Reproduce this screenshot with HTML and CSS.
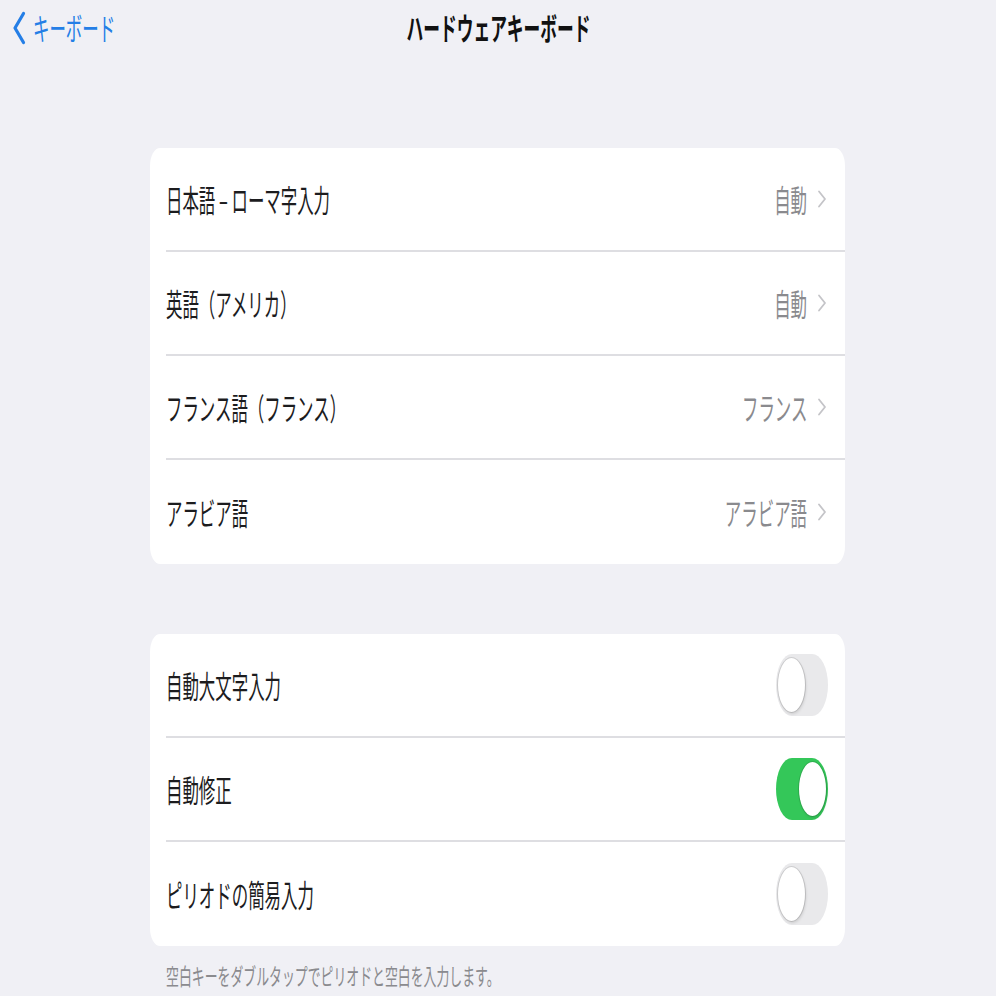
FILE: index.html
```html
<!DOCTYPE html>
<html lang="ja">
<head>
    <meta charset="UTF-8">
    <meta name="viewport" content="width=device-width, initial-scale=1.0">
    <title>ハードウェアキーボード</title>
    <link rel="stylesheet" href="styles.css">
</head>
<body>
    <header class="nav">
        <a class="nav-back" href="#">
            <svg class="back-chevron" width="14" height="34" viewBox="0 0 14 34">
                <path d="M11.5 2.5 L3 17 L11.5 31.5" fill="none" stroke="#247ee6" stroke-width="3.2" stroke-linecap="round" stroke-linejoin="round"/>
            </svg>
            <span class="squish squish-left">キーボード</span>
        </a>
        <h1 class="nav-title"><span class="squish squish-center">ハードウェアキーボード</span></h1>
        <div></div>
    </header>

    <section class="group">
        <div class="row">
            <div class="row-body">
                <span class="label squish squish-left">日本語 – ローマ字入力</span>
                <span class="value squish squish-right">自動</span>
                <svg class="chevron" width="10" height="18" viewBox="0 0 10 18"><path d="M2 1.5 L8 9 L2 16.5" fill="none" stroke="#c4c4c8" stroke-width="1.8" stroke-linecap="round" stroke-linejoin="round"/></svg>
            </div>
        </div>
        <div class="row">
            <div class="row-body">
                <span class="label squish squish-left">英語（アメリカ）</span>
                <span class="value squish squish-right">自動</span>
                <svg class="chevron" width="10" height="18" viewBox="0 0 10 18"><path d="M2 1.5 L8 9 L2 16.5" fill="none" stroke="#c4c4c8" stroke-width="1.8" stroke-linecap="round" stroke-linejoin="round"/></svg>
            </div>
        </div>
        <div class="row">
            <div class="row-body">
                <span class="label squish squish-left">フランス語（フランス）</span>
                <span class="value squish squish-right">フランス</span>
                <svg class="chevron" width="10" height="18" viewBox="0 0 10 18"><path d="M2 1.5 L8 9 L2 16.5" fill="none" stroke="#c4c4c8" stroke-width="1.8" stroke-linecap="round" stroke-linejoin="round"/></svg>
            </div>
        </div>
        <div class="row">
            <div class="row-body">
                <span class="label squish squish-left">アラビア語</span>
                <span class="value squish squish-right">アラビア語</span>
                <svg class="chevron" width="10" height="18" viewBox="0 0 10 18"><path d="M2 1.5 L8 9 L2 16.5" fill="none" stroke="#c4c4c8" stroke-width="1.8" stroke-linecap="round" stroke-linejoin="round"/></svg>
            </div>
        </div>
    </section>

    <section class="group group-second">
        <div class="row">
            <div class="row-body">
                <span class="label squish squish-left">自動大文字入力</span>
                <span class="toggle"><span class="knob"></span></span>
            </div>
        </div>
        <div class="row">
            <div class="row-body">
                <span class="label squish squish-left">自動修正</span>
                <span class="toggle on"><span class="knob"></span></span>
            </div>
        </div>
        <div class="row">
            <div class="row-body">
                <span class="label squish squish-left">ピリオドの簡易入力</span>
                <span class="toggle"><span class="knob"></span></span>
            </div>
        </div>
    </section>
    <p class="footnote"><span class="squish squish-left">空白キーをダブルタップでピリオドと空白を入力します。</span></p>
</body>
</html>
```

FILE: styles.css
```css
body {
    margin: 0;
    background-color: #f0f0f5;
    font-family: "Noto Sans CJK JP", "Noto Sans", sans-serif;
    color: #1c1c1e;
    overflow: hidden;
}

/* the screenshot is squeezed horizontally, so text is narrowed */
.squish {
    display: inline-block;
    white-space: nowrap;
    transform: scaleX(0.53);
}

.squish-left {
    transform-origin: left center;
}

.squish-right {
    transform-origin: right center;
}

.squish-center {
    transform-origin: center center;
}

.nav {
    display: grid;
    grid-template-columns: 1fr auto 1fr;
    align-items: center;
    height: 54px;
}

.nav-back {
    display: flex;
    align-items: center;
    padding-left: 12px;
    color: #247ee6;
    text-decoration: none;
    font-size: 31px;
    line-height: 40px;
}

.back-chevron {
    margin-right: 7px;
    margin-top: 2px;
}

.nav-title {
    margin: 0;
    font-size: 31px;
    font-weight: 700;
    line-height: 40px;
    color: #111;
}

.nav-title .squish {
    transform: scaleX(0.54);
}

.group {
    margin: 94px 151px 0 150px;
    background-color: #fff;
    border-radius: 10px / 18px;
    overflow: hidden;
}

.group-second {
    margin-top: 70px;
}

.row {
    padding-left: 16px;
}

.row-body {
    display: flex;
    align-items: center;
    height: 104px;
    box-sizing: border-box;
    padding-right: 17px;
    border-bottom: 2px solid #dedee2;
}

.row:last-child .row-body {
    border-bottom: none;
}

.label {
    flex: 1;
    font-size: 31px;
    line-height: 40px;
}

.value {
    font-size: 31px;
    line-height: 40px;
    color: #8a8a8e;
}

.chevron {
    margin-left: 10px;
    margin-right: 1px;
}

.toggle {
    display: flex;
    align-items: center;
    width: 52px;
    height: 62px;
    box-sizing: border-box;
    padding: 0 2px;
    border-radius: 16px / 31px;
    background-color: #e9e9eb;
}

.toggle.on {
    justify-content: flex-end;
    background-color: #34c759;
}

.knob {
    width: 27px;
    height: 54px;
    border-radius: 50%;
    background-color: #fff;
    box-shadow: 0 0 0 1px rgba(0, 0, 0, 0.12), 1px 2px 3px rgba(0, 0, 0, 0.12);
}

.footnote {
    margin: 12px 0 0 166px;
    font-size: 23px;
    line-height: 34px;
    color: #8a8a8e;
}

.footnote .squish {
    transform: scaleX(0.56);
}
```
